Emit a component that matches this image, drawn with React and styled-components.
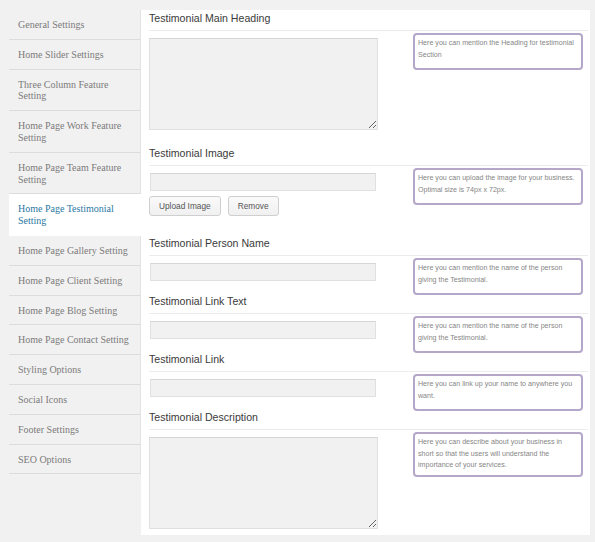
import React from 'react'
import styled, { createGlobalStyle } from 'styled-components'

const GlobalStyle = createGlobalStyle`
  body {
    margin: 0;
    background: #f1f1f1;
    font-family: "Liberation Sans", Arial, sans-serif;
  }
`

const Page = styled.div`
  display: flex;
  align-items: flex-start;
  padding: 10px 5px 8px 9px;
`

const Sidebar = styled.ul`
  list-style: none;
  margin: 0;
  padding: 0;
  width: 132px;
  flex-shrink: 0;
`

const MenuItem = styled.li`
  padding: 9px 7px 8px 9px;
  line-height: 11.8px;
  font-family: "Liberation Serif", "Times New Roman", serif;
  font-size: 10px;
  color: ${(p) => (p.active ? '#2b78a3' : '#7b7b7b')};
  background: ${(p) => (p.active ? '#fff' : 'transparent')};
  border-bottom: 1px solid ${(p) => (p.active ? '#fff' : '#dcdcdc')};
  border-right: 1px solid ${(p) => (p.active ? '#fff' : '#e3e3e3')};
`

const Panel = styled.div`
  width: 449px;
  background: #fff;
  padding-bottom: 3px;
`

const Section = styled.div`
  padding-left: 8px;
`

const Heading = styled.h3`
  margin: 0 2px 0 0;
  padding: 1px 0 4px;
  line-height: 15px;
  font-size: 10.6px;
  font-weight: normal;
  color: #3a3a3a;
  border-bottom: 1px solid #ececec;
`

const Body = styled.div`
  display: flex;
  align-items: flex-start;
`

const FieldCol = styled.div`
  width: 229px;
  flex-shrink: 0;
  padding: 7px 0 ${(p) => (p.last ? '0' : '12px')};
`

const TextArea = styled.textarea`
  display: block;
  box-sizing: border-box;
  width: 229px;
  height: 92px;
  margin: 0 0 3px;
  background: #f1f1f1;
  border: 1px solid #e0e0e0;
  border-top-color: #d6d6d6;
  border-radius: 0;
  outline: none;
`

const Input = styled.input`
  display: block;
  box-sizing: border-box;
  width: 226px;
  height: 18px;
  margin: 0 0 0 1px;
  padding: 0 4px;
  background: #f1f1f1;
  border: 1px solid #e0e0e0;
  border-top-color: #d6d6d6;
  border-radius: 0;
  outline: none;
`

const ButtonRow = styled.div`
  display: flex;
  gap: 7px;
  margin: 5px 0 7px;
`

const Button = styled.button`
  height: 20px;
  padding: 0 9px;
  font-family: "Liberation Sans", Arial, sans-serif;
  font-size: 8.3px;
  color: #555;
  background: linear-gradient(#fafafa, #f0f0f0);
  border: 1px solid #cfcfcf;
  border-radius: 3px;
`

const Help = styled.div`
  box-sizing: border-box;
  width: 170px;
  min-height: 37px;
  margin: 2px 0 -4px 35px;
  padding: 3px;
  font-size: 7.1px;
  line-height: 11.5px;
  color: #868686;
  border: 2px solid #b4a7c9;
  border-radius: 4px;
  white-space: nowrap;
`

const menu = [
  'General Settings',
  'Home Slider Settings',
  'Three Column Feature Setting',
  'Home Page Work Feature Setting',
  'Home Page Team Feature Setting',
  'Home Page Testimonial Setting',
  'Home Page Gallery Setting',
  'Home Page Client Setting',
  'Home Page Blog Setting',
  'Home Page Contact Setting',
  'Styling Options',
  'Social Icons',
  'Footer Settings',
  'SEO Options',
]

const fields = [
  {
    title: 'Testimonial Main Heading',
    type: 'textarea',
    help: ['Here you can mention the Heading for testimonial', 'Section'],
  },
  {
    title: 'Testimonial Image',
    type: 'upload',
    help: ['Here you can upload the image for your business.', 'Optimal size is 74px x 72px.'],
  },
  {
    title: 'Testimonial Person Name',
    type: 'text',
    help: ['Here you can mention the name of the person', 'giving the Testimonial.'],
  },
  {
    title: 'Testimonial Link Text',
    type: 'text',
    help: ['Here you can mention the name of the person', 'giving the Testimonial.'],
  },
  {
    title: 'Testimonial Link',
    type: 'text',
    help: ['Here you can link up your name to anywhere you', 'want.'],
  },
  {
    title: 'Testimonial Description',
    type: 'textarea',
    help: [
      'Here you can describe about your business in',
      'short so that the users will understand the',
      'importance of your services.',
    ],
  },
]

const Field = ({ type }) => {
  if (type === 'textarea') return <TextArea />
  if (type === 'upload')
    return (
      <>
        <Input type="text" />
        <ButtonRow>
          <Button>Upload Image</Button>
          <Button>Remove</Button>
        </ButtonRow>
      </>
    )
  return <Input type="text" />
}

const App = () => {
  return (
    <>
      <GlobalStyle />
      <Page>
        <Sidebar>
          {menu.map((m) => (
            <MenuItem key={m} active={m === 'Home Page Testimonial Setting'}>
              {m}
            </MenuItem>
          ))}
        </Sidebar>
        <Panel>
          {fields.map((f, i) => (
            <Section key={f.title}>
              <Heading>{f.title}</Heading>
              <Body>
                <FieldCol last={i === fields.length - 1}>
                  <Field type={f.type} />
                </FieldCol>
                <Help>
                  {f.help.map((line, j) => (
                    <div key={j}>{line}</div>
                  ))}
                </Help>
              </Body>
            </Section>
          ))}
        </Panel>
      </Page>
    </>
  )
}

export default App
